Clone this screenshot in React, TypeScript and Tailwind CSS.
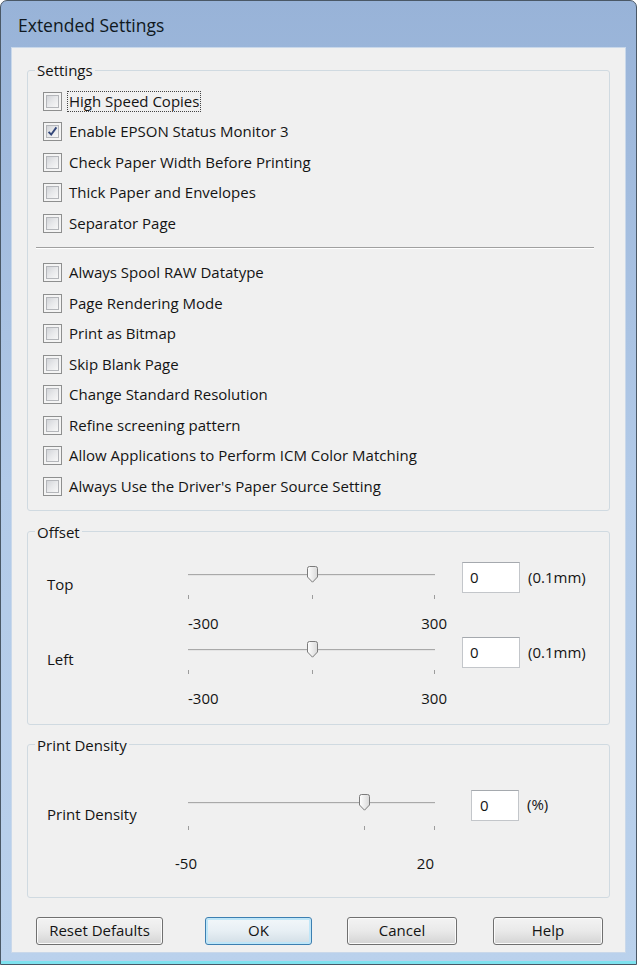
import React from "react";

type Row = { label: string; checked?: boolean; focus?: boolean };

const topGroup: Row[] = [
    { label: "High Speed Copies", focus: true },
    { label: "Enable EPSON Status Monitor 3", checked: true },
    { label: "Check Paper Width Before Printing" },
    { label: "Thick Paper and Envelopes" },
    { label: "Separator Page" },
];

const bottomGroup: Row[] = [
    { label: "Always Spool RAW Datatype" },
    { label: "Page Rendering Mode" },
    { label: "Print as Bitmap" },
    { label: "Skip Blank Page" },
    { label: "Change Standard Resolution" },
    { label: "Refine screening pattern" },
    { label: "Allow Applications to Perform ICM Color Matching" },
    { label: "Always Use the Driver's Paper Source Setting" },
];

function CheckBox({ checked }: { checked?: boolean }) {
    return (
        <span className="flex h-[19px] w-[19px] shrink-0 border border-[#8e8f8f] bg-[#f4f4f4] p-[2px]">
            <span className="relative block h-full w-full border border-[#b4b6ba] bg-gradient-to-br from-[#d3d5d9] via-[#e8e9eb] to-[#f7f7f7]">
                {checked && (
                    <svg viewBox="0 0 13 13" className="absolute -left-[1px] -top-[1px] h-[13px] w-[13px]">
                        <path d="M2.6 6.8 L5.2 9.6 L10.4 2.4" fill="none" stroke="#33477a" strokeWidth="1.9" />
                    </svg>
                )}
            </span>
        </span>
    );
}

function CheckRow({ row }: { row: Row }) {
    return (
        <div className="flex h-[30.5px] items-center gap-[5px]">
            <CheckBox checked={row.checked} />
            <span
                className={
                    row.focus
                        ? "border border-dotted border-[#444] px-[1px] leading-[19px]"
                        : "px-[2px] leading-[19px]"
                }
            >
                {row.label}
            </span>
        </div>
    );
}

function Thumb() {
    return (
        <svg viewBox="0 0 11 17" className="h-[17px] w-[11px]">
            <defs>
                <linearGradient id="thumbFill" x1="0" y1="0" x2="1" y2="0">
                    <stop offset="0" stopColor="#ffffff" />
                    <stop offset="1" stopColor="#d9d9d9" />
                </linearGradient>
            </defs>
            <path
                d="M2.5 0.5 H8.5 A2 2 0 0 1 10.5 2.5 V11 L5.5 16.2 L0.5 11 V2.5 A2 2 0 0 1 2.5 0.5 Z"
                fill="url(#thumbFill)"
                stroke="#7b7b7b"
            />
        </svg>
    );
}

function Slider({
    pos,
    min,
    max,
    tickClass,
    numClass,
}: {
    pos: number;
    min: string;
    max: string;
    tickClass: string;
    numClass: string;
}) {
    return (
        <div className="w-[257px] shrink-0 px-[5px]">
            <div className="relative h-[28px]">
                <div className="absolute left-0 right-0 top-[13px] h-[2px] border-t border-b border-t-[#a9a9a9] border-b-[#e4e4e4]" />
                <div className="absolute top-[5px]" style={{ left: `calc(${pos * 100}% - 5px)` }}>
                    <Thumb />
                </div>
            </div>
            <div className={`relative h-[4px] ${tickClass}`}>
                <span className="absolute left-0 top-0 h-full w-px bg-[#9c9c9c]" />
                <span className="absolute top-0 h-full w-px bg-[#9c9c9c]" style={{ left: `${pos * 100}%` }} />
                <span className="absolute right-0 top-0 h-full w-px bg-[#9c9c9c]" />
            </div>
            <div className={`flex justify-between leading-[20px] ${numClass}`}>
                <span>{min}</span>
                <span>{max}</span>
            </div>
        </div>
    );
}

function GroupBox({ title, className, children }: { title: string; className: string; children: React.ReactNode }) {
    return (
        <fieldset className={`mx-[15px] rounded-[3px] border border-[#d0dae1] ${className}`}>
            <legend className="ml-[7px] px-[2px] leading-[20px]">{title}</legend>
            {children}
        </fieldset>
    );
}

const btn =
    "flex h-[28px] items-center justify-center rounded-[3px] border border-[#707070] bg-gradient-to-b from-[#f3f3f3] via-[#e9e9e9] to-[#d4d4d4] shadow-[inset_0_0_0_1px_#fbfbfb]";

export default function App() {
    return (
        <div className="h-[965px] w-[640px] overflow-hidden bg-white font-['Open_Sans','Liberation_Sans',sans-serif] text-[15px] font-medium text-[#141414]">
            <div className="flex h-[965px] w-[637px] flex-col rounded-t-[7px] border border-[#4a5866] bg-gradient-to-b from-[#98b3d8] via-[#b2cae8] to-[#bad1ec]">
                <div className="flex h-[46px] shrink-0 items-center pl-[17px] pt-[2px] text-[17.5px] text-[#101820]">
                    Extended Settings
                </div>
                <div className="mx-[10px] flex h-[906px] shrink-0 flex-col border border-[#c9d8ea] bg-[#f0f0f0]">
                    <GroupBox title="Settings" className="mt-[12px] pb-[8px]">
                        <div className="pl-[15px] pt-[6px]">
                            {topGroup.map((r) => (
                                <CheckRow key={r.label} row={r} />
                            ))}
                        </div>
                        <div className="ml-[8px] mr-[15px] mt-[8px] mb-[9px] h-[2px] border-t border-b border-t-[#a0a0a0] border-b-white" />
                        <div className="pl-[15px]">
                            {bottomGroup.map((r) => (
                                <CheckRow key={r.label} row={r} />
                            ))}
                        </div>
                    </GroupBox>

                    <GroupBox title="Offset" className="mt-[11px] pb-[13px]">
                        <div className="pl-[19px] pt-[19px]">
                            {["Top", "Left"].map((name) => (
                                <div key={name} className="flex h-[75px] items-start">
                                    <div className="w-[136px] shrink-0 pt-[13px] leading-[20px]">{name}</div>
                                    <Slider pos={0.5} min="-300" max="300" tickClass="mt-[6px]" numClass="mt-[14px] -mr-[12px]" />
                                    <div className="ml-[22px] mt-[1px] flex h-[31px] w-[58px] items-center border border-[#c3c6ca] border-t-[#a5a9ae] bg-white pl-[7px]">
                                        0
                                    </div>
                                    <div className="ml-[8px] mt-[6px] leading-[20px]">(0.1mm)</div>
                                </div>
                            ))}
                        </div>
                    </GroupBox>

                    <GroupBox title="Print Density" className="mt-[10px] pb-[24px]">
                        <div className="flex items-start pl-[19px] pt-[34px]">
                            <div className="w-[136px] shrink-0 pt-[15px] leading-[20px]">Print Density</div>
                            <Slider pos={50 / 70} min="-50" max="20" tickClass="mt-[9px]" numClass="mt-[23px] -ml-[13px] mr-[1px]" />
                            <div className="ml-[31px] mt-[1px] flex h-[31px] w-[48px] items-center border border-[#c3c6ca] border-t-[#a5a9ae] bg-white pl-[8px]">
                                0
                            </div>
                            <div className="ml-[8px] mt-[5px] leading-[20px]">(%)</div>
                        </div>
                    </GroupBox>

                    <div className="mt-[19px] flex pl-[24px]">
                        <div className={`${btn} w-[127px]`}>Reset Defaults</div>
                        <div className="ml-[42px] flex h-[28px] w-[107px] items-center justify-center rounded-[3px] border border-[#3c7fb1] bg-gradient-to-b from-[#f2f7fa] via-[#e7eff4] to-[#d2dee6] shadow-[inset_0_0_0_2px_#bfe6f8]">
                            OK
                        </div>
                        <div className={`${btn} ml-[35px] w-[110px]`}>Cancel</div>
                        <div className={`${btn} ml-[36px] w-[110px]`}>Help</div>
                    </div>
                </div>
                <div className="mt-auto h-[3px] bg-[#7fe2ef]" />
            </div>
        </div>
    );
}
